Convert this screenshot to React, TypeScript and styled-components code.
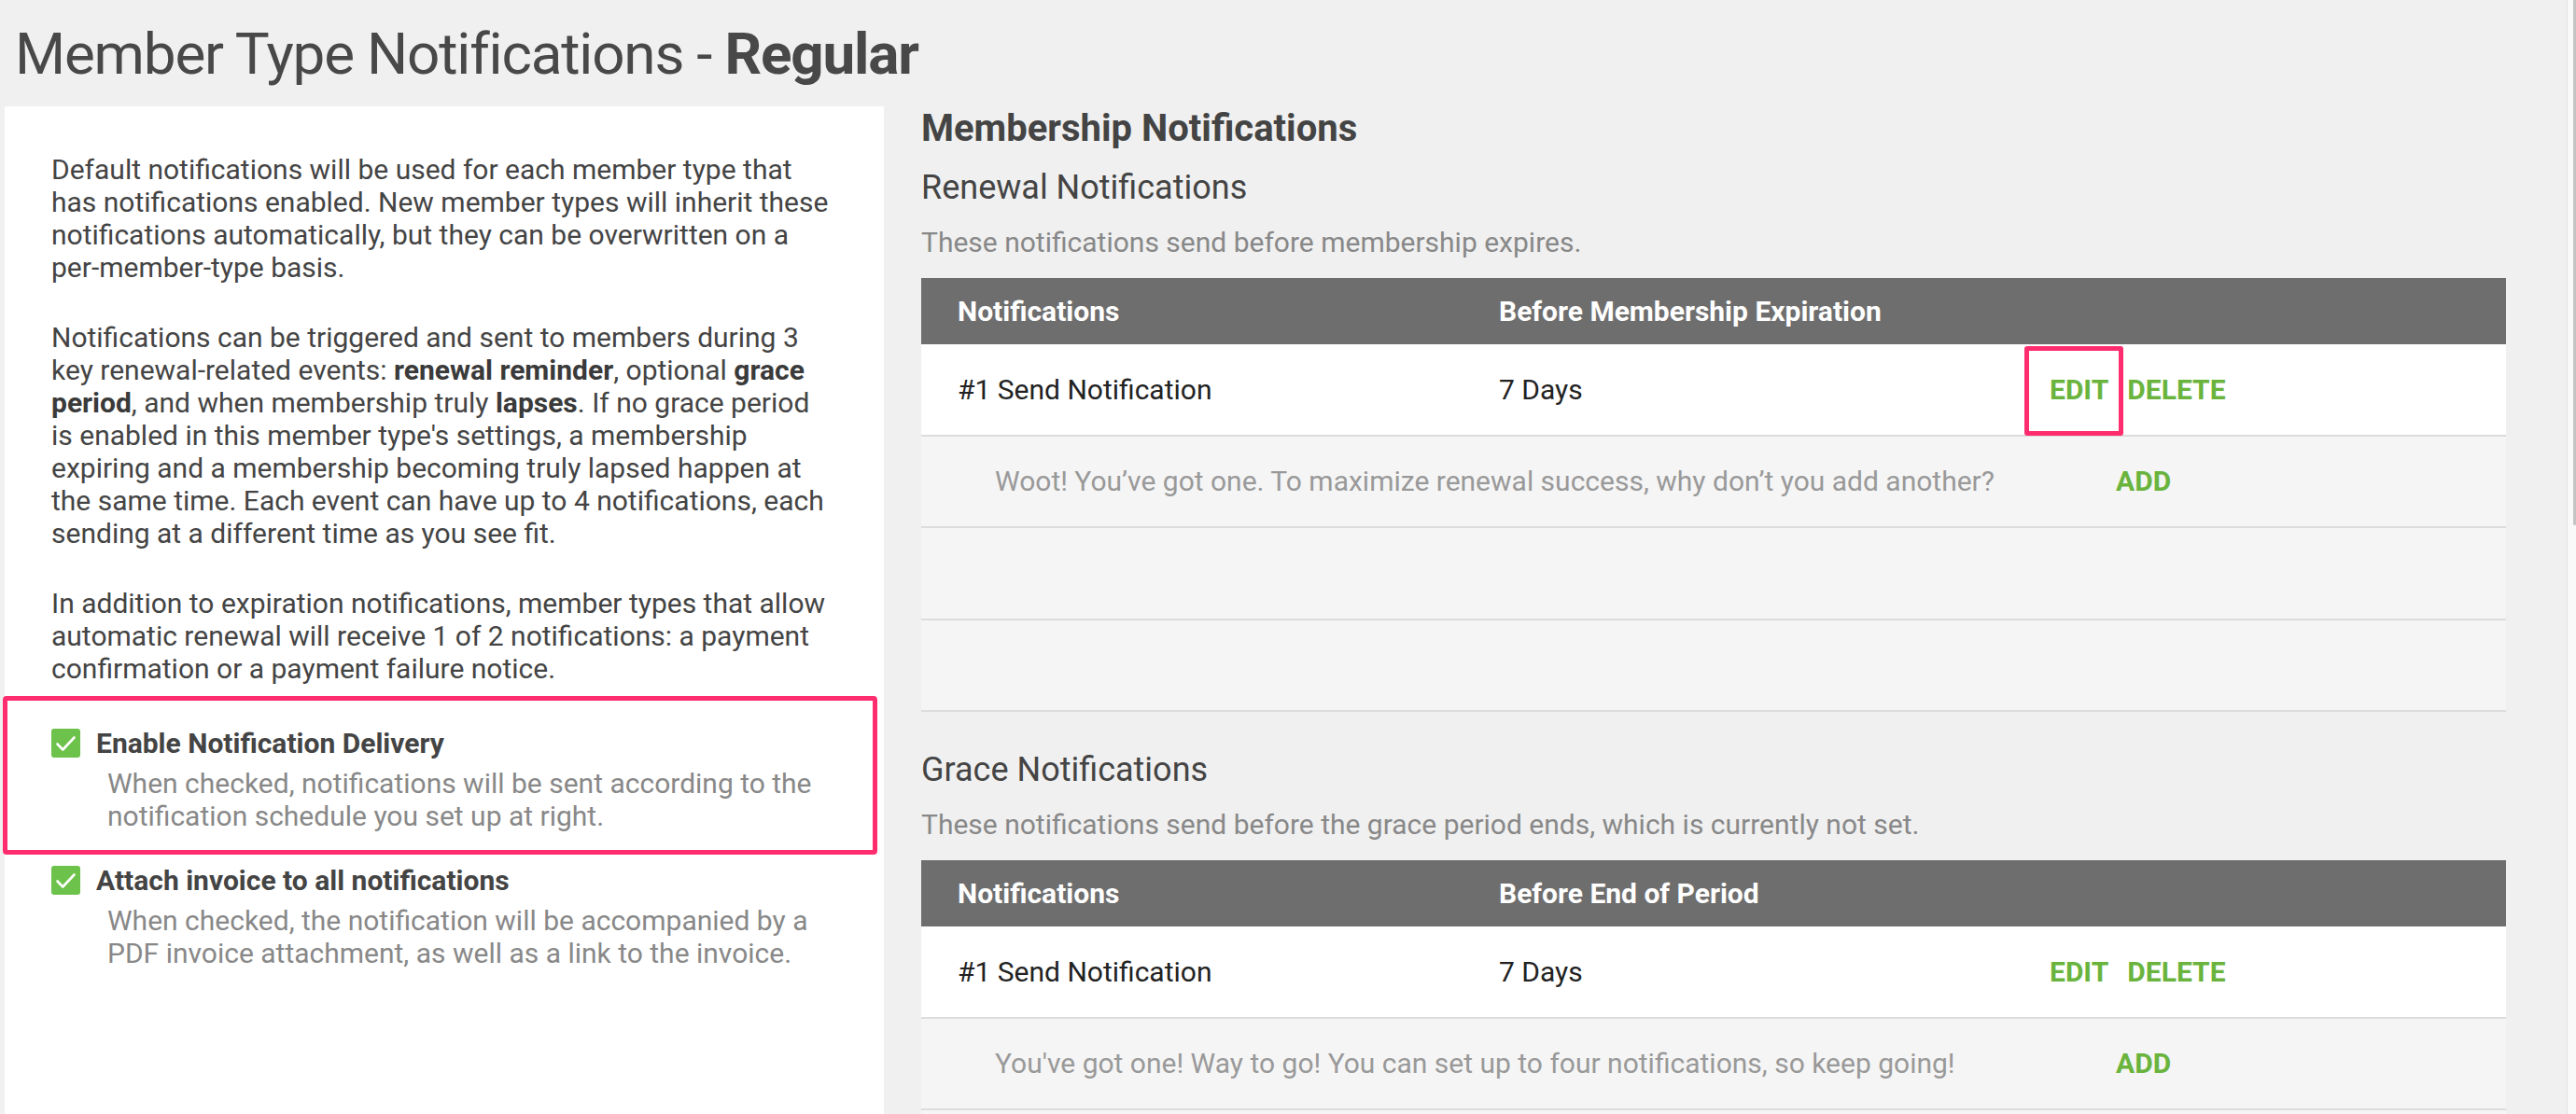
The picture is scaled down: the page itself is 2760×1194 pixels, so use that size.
import React from "react";
import styled, { createGlobalStyle } from "styled-components";

const GlobalStyle = createGlobalStyle`
  html, body {
    margin: 0;
    padding: 0;
    height: 100%;
    overflow: hidden;
    background: #f0f0f0;
  }
  body {
    font-family: Roboto, "Liberation Sans", Arial, sans-serif;
    color: #444;
  }
  #root { height: 100%; }
`;

const Shell = styled.div`
  display: flex;
  height: 100vh;
  overflow: hidden;
`;

const Main = styled.main`
  flex: 1;
  min-width: 0;
  display: flex;
  flex-direction: column;
  padding-left: 5px;
`;

const ScrollTrack = styled.div`
  width: 9px;
  border-left: 1px solid #e2e2e2;
  background: #f9f9f9;
  display: flex;
  justify-content: flex-end;
`;

const ScrollThumb = styled.div`
  width: 3px;
  height: 563px;
  background: #c4c4c4;
  border-radius: 0 0 2px 2px;
`;

const PageTitle = styled.h1`
  margin: 0;
  padding: 21px 0 0 11px;
  font-size: 62px;
  line-height: 74px;
  letter-spacing: -1.2px;
  font-weight: 400;
  color: #484848;
  white-space: nowrap;
  b { font-weight: 700; }
`;

const Columns = styled.div`
  flex: 1;
  min-height: 0;
  margin-top: 19px;
  display: grid;
  grid-template-columns: 942px 1fr;
  column-gap: 40px;
`;

const LeftPanel = styled.aside`
  background:
    radial-gradient(70% 90px at 45% 100%, rgba(0, 0, 0, 0.035), rgba(0, 0, 0, 0)) bottom / 100% 120px no-repeat,
    #fff;
  padding: 50px 59px 0 50px;
`;

const Para = styled.p`
  margin: 0 0 40px;
  font-size: 30px;
  line-height: 35px;
  color: #444;
  b { font-weight: 700; color: #3a3a3a; }
  &:last-of-type { margin-bottom: 0; }
`;

const Highlight = styled.div`
  margin: 12px -52px 0 -52px;
  border: 5px solid #ff2d6e;
  border-radius: 4px;
  padding: 28px 38px 19px 47px;
`;

const OptionItem = styled.div<{ $gap?: number }>`
  margin-top: ${(p) => p.$gap ?? 0}px;
`;

const OptionLabel = styled.label`
  display: flex;
  align-items: center;
  gap: 17px;
  font-size: 30px;
  line-height: 35px;
  font-weight: 700;
  color: #444;
`;

const CheckBox = styled.span`
  width: 31px;
  height: 31px;
  flex: none;
  border-radius: 3px;
  background: #6cc24a;
  display: inline-flex;
  align-items: center;
  justify-content: center;
`;

const OptionHelp = styled.div`
  margin-top: 8px;
  padding-left: 60px;
  font-size: 30px;
  line-height: 35px;
  color: #888;
`;

const RightCol = styled.section`
  padding-right: 65px;
  min-width: 0;
`;

const SectionTitle = styled.h2`
  margin: 0;
  font-size: 40px;
  line-height: 48px;
  font-weight: 700;
  color: #444;
`;

const Group = styled.div<{ $first?: boolean }>`
  margin-top: ${(p) => (p.$first ? 18 : 41)}px;
`;

const GroupTitle = styled.h3`
  margin: 0;
  font-size: 36px;
  line-height: 42px;
  font-weight: 400;
  color: #444;
`;

const GroupDesc = styled.p`
  margin: 20px 0 21px;
  font-size: 30px;
  line-height: 35px;
  color: #888;
`;

const Table = styled.div`
  width: 100%;
`;

const HeadRow = styled.div`
  height: 71px;
  background: #6e6e6e;
  color: #fff;
  font-weight: 700;
  font-size: 30px;
  display: grid;
  grid-template-columns: 580px 590px 1fr;
  align-items: center;
  padding-left: 39px;
`;

const Row = styled.div<{ $tone: "white" | "grey" }>`
  height: 96.5px;
  border-bottom: 2px solid #dcdcdc;
  background: ${(p) => (p.$tone === "white" ? "#fff" : "#f5f5f5")};
  font-size: 30px;
  line-height: 35px;
  display: grid;
  align-items: center;
`;

const ItemRow = styled(Row)`
  grid-template-columns: 580px 590px 1fr;
  padding-left: 39px;
  color: #222;
`;

const PromptRow = styled(Row)`
  grid-template-columns: 1201px 1fr;
  padding-left: 79px;
  color: #999;
`;

const Actions = styled.div`
  display: flex;
  gap: 20px;
`;

const ActionLink = styled.a<{ $marked?: boolean }>`
  position: relative;
  color: #6ab43e;
  font-weight: 700;
  font-size: 30px;
  text-decoration: none;
  cursor: pointer;
  ${(p) =>
    p.$marked
      ? `
    &::after {
      content: "";
      position: absolute;
      left: -27px;
      right: -16px;
      top: -29px;
      bottom: -32px;
      border: 5px solid #ff2d6e;
      border-radius: 3px;
    }
  `
      : ""}
`;

const CheckMark = () => (
  <svg width="31" height="31" viewBox="0 0 31 31" aria-hidden="true">
    <path
      d="M6.5 16.5l5.8 6L24.5 9.5"
      fill="none"
      stroke="#fff"
      strokeWidth="2.6"
      strokeLinecap="round"
      strokeLinejoin="round"
    />
  </svg>
);

type GroupData = {
  title: string;
  desc: string;
  column: string;
  prompt: string;
  marked?: boolean;
};

const groups: GroupData[] = [
  {
    title: "Renewal Notifications",
    desc: "These notifications send before membership expires.",
    column: "Before Membership Expiration",
    prompt:
      "Woot! You\u2019ve got one. To maximize renewal success, why don\u2019t you add another?",
    marked: true,
  },
  {
    title: "Grace Notifications",
    desc: "These notifications send before the grace period ends, which is currently not set.",
    column: "Before End of Period",
    prompt:
      "You've got one! Way to go! You can set up to four notifications, so keep going!",
  },
];

export default function App() {
  return (
    <>
      <GlobalStyle />
      <Shell>
        <Main>
          <PageTitle>
            Member Type Notifications - <b>Regular</b>
          </PageTitle>
          <Columns>
            <LeftPanel>
              <Para>
                Default notifications will be used for each member type that has
                notifications enabled. New member types will inherit these
                notifications automatically, but they can be overwritten on a
                per-member-type basis.
              </Para>
              <Para>
                Notifications can be triggered and sent to members during 3 key
                renewal-related events: <b>renewal reminder</b>, optional{" "}
                <b>grace period</b>, and when membership truly <b>lapses</b>. If
                no grace period is enabled in this member type's settings, a
                membership expiring and a membership becoming truly lapsed
                happen at the same time. Each event can have up to 4
                notifications, each sending at a different time as you see fit.
              </Para>
              <Para>
                In addition to expiration notifications, member types that allow
                automatic renewal will receive 1 of 2 notifications: a payment
                confirmation or a payment failure notice.
              </Para>
              <Highlight>
                <OptionItem>
                  <OptionLabel>
                    <CheckBox>
                      <CheckMark />
                    </CheckBox>
                    Enable Notification Delivery
                  </OptionLabel>
                  <OptionHelp>
                    When checked, notifications will be sent according to the
                    notification schedule you set up at right.
                  </OptionHelp>
                </OptionItem>
              </Highlight>
              <OptionItem $gap={10}>
                <OptionLabel>
                  <CheckBox>
                    <CheckMark />
                  </CheckBox>
                  Attach invoice to all notifications
                </OptionLabel>
                <OptionHelp>
                  When checked, the notification will be accompanied by a PDF
                  invoice attachment, as well as a link to the invoice.
                </OptionHelp>
              </OptionItem>
            </LeftPanel>
            <RightCol>
              <SectionTitle>Membership Notifications</SectionTitle>
              {groups.map((g, i) => (
                <Group key={g.title} $first={i === 0}>
                  <GroupTitle>{g.title}</GroupTitle>
                  <GroupDesc>{g.desc}</GroupDesc>
                  <Table>
                    <HeadRow>
                      <span>Notifications</span>
                      <span>{g.column}</span>
                      <span />
                    </HeadRow>
                    <ItemRow $tone="white">
                      <span>#1 Send Notification</span>
                      <span>7 Days</span>
                      <Actions>
                        <ActionLink $marked={g.marked}>EDIT</ActionLink>
                        <ActionLink>DELETE</ActionLink>
                      </Actions>
                    </ItemRow>
                    <PromptRow $tone="grey">
                      <span>{g.prompt}</span>
                      <span>
                        <ActionLink>ADD</ActionLink>
                      </span>
                    </PromptRow>
                    <PromptRow $tone="grey" />
                    <PromptRow $tone="grey" />
                  </Table>
                </Group>
              ))}
            </RightCol>
          </Columns>
        </Main>
        <ScrollTrack>
          <ScrollThumb />
        </ScrollTrack>
      </Shell>
    </>
  );
}
